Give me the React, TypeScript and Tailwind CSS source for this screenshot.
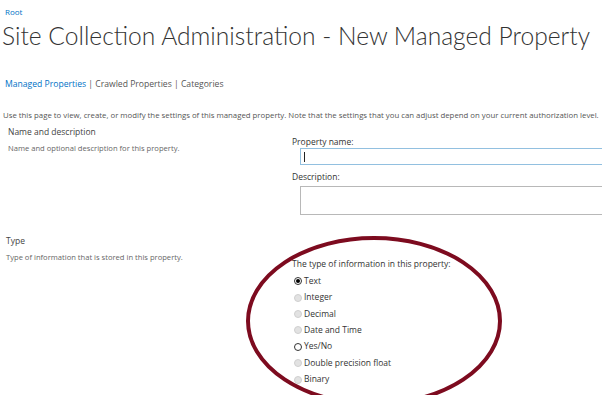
import React from "react";

const types = [
  { label: "Text", state: "checked" },
  { label: "Integer", state: "disabled" },
  { label: "Decimal", state: "disabled" },
  { label: "Date and Time", state: "disabled" },
  { label: "Yes/No", state: "enabled" },
  { label: "Double precision float", state: "disabled" },
  { label: "Binary", state: "disabled" },
];

function Radio({ state }: { state: string }) {
  if (state === "disabled") {
    return <span className="w-[8px] h-[8px] rounded-full bg-[#e2e2e2] border border-[#d0d0d0] shrink-0" />;
  }
  return (
    <span className="w-[8px] h-[8px] rounded-full bg-white border border-[#333] shrink-0 flex items-center justify-center">
      {state === "checked" && <span className="w-[4px] h-[4px] rounded-full bg-black" />}
    </span>
  );
}

export default function App() {
  return (
    <div className="relative w-[602px] h-[395px] overflow-hidden bg-white text-[#444] font-['Open_Sans','Liberation_Sans',sans-serif]">
      <div className="pl-[5px] pt-[6px] text-[8px] leading-[12px] text-[#0072c6]">Root</div>
      <h1 className="pl-[2px] mt-[2px] text-[24.6px] leading-[32px] font-light text-[#333] whitespace-nowrap font-['Lato','Open_Sans',sans-serif]">
        Site Collection Administration - New Managed Property
      </h1>

      <div className="pl-[5px] mt-[26px] text-[8.6px] leading-[12px]">
        <span className="text-[#0072c6]">Managed Properties</span>
        <span className="text-[#555]"> | Crawled Properties | Categories</span>
      </div>

      <p className="pl-[3px] mt-[20px] text-[7.8px] leading-[10px] text-[#555] whitespace-nowrap">
        Use this page to view, create, or modify the settings of this managed property. Note that the settings that you can adjust depend on your current authorization level.
      </p>

      {/* Name and description */}
      <div className="flex mt-[5px]">
        <div className="w-[290px] shrink-0 pl-[8px] pt-[1px]">
          <div className="text-[8.5px] leading-[12px] text-[#444]">Name and description</div>
          <div className="mt-[5px] text-[7.6px] leading-[10px] text-[#666]">
            Name and optional description for this property.
          </div>
        </div>
        <div className="pt-[11px] pl-[2px]">
          <div className="text-[8.5px] leading-[12px] text-[#333]">Property name:</div>
          <div className="ml-[8px] w-[320px] h-[17px] border border-[#92c0e0] flex items-center pl-[3px]">
            <span className="w-px h-[10px] bg-[#222]" />
          </div>
          <div className="mt-[6px] text-[8.5px] leading-[12px] text-[#333]">Description:</div>
          <div className="ml-[8px] mt-[3px] w-[320px] h-[29px] border border-[#b8b8b8]" />
        </div>
      </div>

      {/* Type */}
      <div className="flex mt-[20px]">
        <div className="w-[290px] shrink-0 pl-[6px]">
          <div className="text-[8.5px] leading-[12px] text-[#444]">Type</div>
          <div className="mt-[5px] text-[7.6px] leading-[10px] text-[#666]">
            Type of information that is stored in this property.
          </div>
        </div>
        <div className="flex-1 pt-[23px] pl-[2px]">
          <div className="text-[8.5px] leading-[12px] text-[#333]">The type of information in this property:</div>
          <div className="mt-[3px] flex flex-col pl-[2px]">
            {types.map((t) => (
              <div key={t.label} className="flex items-center gap-[2px] h-[16.4px] text-[8.5px] text-[#333]">
                <Radio state={t.state} />
                <span>{t.label}</span>
              </div>
            ))}
          </div>
        </div>
      </div>

      <svg className="absolute left-0 top-0 pointer-events-none" width="602" height="395" viewBox="0 0 602 395">
        <ellipse cx="374" cy="321" rx="126" ry="83" fill="none" stroke="#7d0b1f" strokeWidth="4" />
      </svg>
    </div>
  );
}
